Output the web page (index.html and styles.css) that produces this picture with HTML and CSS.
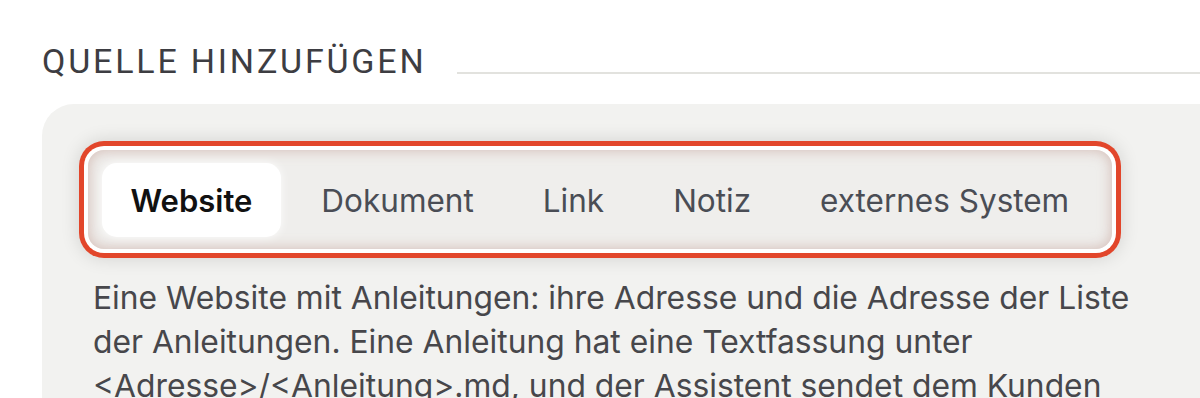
FILE: index.html
```html
<!DOCTYPE html>
<html lang="de">
<head>
    <meta charset="UTF-8">
    <meta name="viewport" content="width=device-width, initial-scale=1.0">
    <title>Quelle hinzufügen</title>
    <link rel="stylesheet" href="styles.css">
</head>
<body>
    <section class="add-source">
        <div class="section-head">
            <h2 class="section-title">QUELLE HINZUFÜGEN</h2>
            <div class="section-rule"></div>
        </div>
        <div class="card">
            <div class="tabs" role="tablist">
                <button class="tab active" role="tab">Website</button>
                <button class="tab" role="tab">Dokument</button>
                <button class="tab" role="tab">Link</button>
                <button class="tab" role="tab">Notiz</button>
                <button class="tab" role="tab">externes System</button>
            </div>
            <p class="tab-help">
                Eine Website mit Anleitungen: ihre Adresse und die Adresse der Liste
                der Anleitungen. Eine Anleitung hat eine Textfassung unter
                &lt;Adresse&gt;/&lt;Anleitung&gt;.md, und der Assistent sendet dem Kunden
                den passenden Link.
            </p>
        </div>
    </section>
</body>
</html>
```

FILE: styles.css
```css
body {
    margin: 0;
    background: #fff;
    font-family: Inter, "Noto Sans", sans-serif;
    overflow: hidden;
}

.add-source {
    padding: 43px 0 0 42px;
}

.section-head {
    display: flex;
    align-items: flex-end;
    gap: 30px;
}

.section-title {
    margin: 0;
    font-family: Roboto, sans-serif;
    font-size: 34px;
    font-weight: 400;
    letter-spacing: 2.8px;
    line-height: 36px;
    color: #3d3d42;
}

.section-rule {
    flex: 1;
    height: 2px;
    margin-bottom: 5px;
    background: #e2e2de;
}

.card {
    margin-top: 25px;
    width: 1240px;
    padding: 46px 0 20px 46px;
    background: #f2f2f0;
    border-radius: 32px;
}

.tabs {
    display: inline-flex;
    gap: 12px;
    padding: 13px 14px 12px;
    background: #efeeec;
    border-radius: 16px;
    box-shadow:
        inset 0 0 14px rgba(190, 150, 140, 0.6),
        0 0 0 4px #fff,
        0 0 0 9px #e2462b,
        0 0 18px 10px rgba(0, 0, 0, 0.12);
}

.tab {
    padding: 0 28.5px;
    height: 74px;
    border: none;
    border-radius: 15px;
    background: transparent;
    font-family: Inter, sans-serif;
    font-size: 31.5px;
    color: #4a4d55;
    cursor: pointer;
}

.tab.active {
    background: #fff;
    color: #111;
    font-size: 31px;
    font-weight: 600;
    box-shadow: 0 0 10px rgba(255, 255, 255, 0.9);
}

.tab-help {
    margin: 27px 0 0 5px;
    max-width: 1065px;
    font-family: Inter, sans-serif;
    font-size: 31.8px;
    line-height: 44px;
    color: #47474b;
}
```
